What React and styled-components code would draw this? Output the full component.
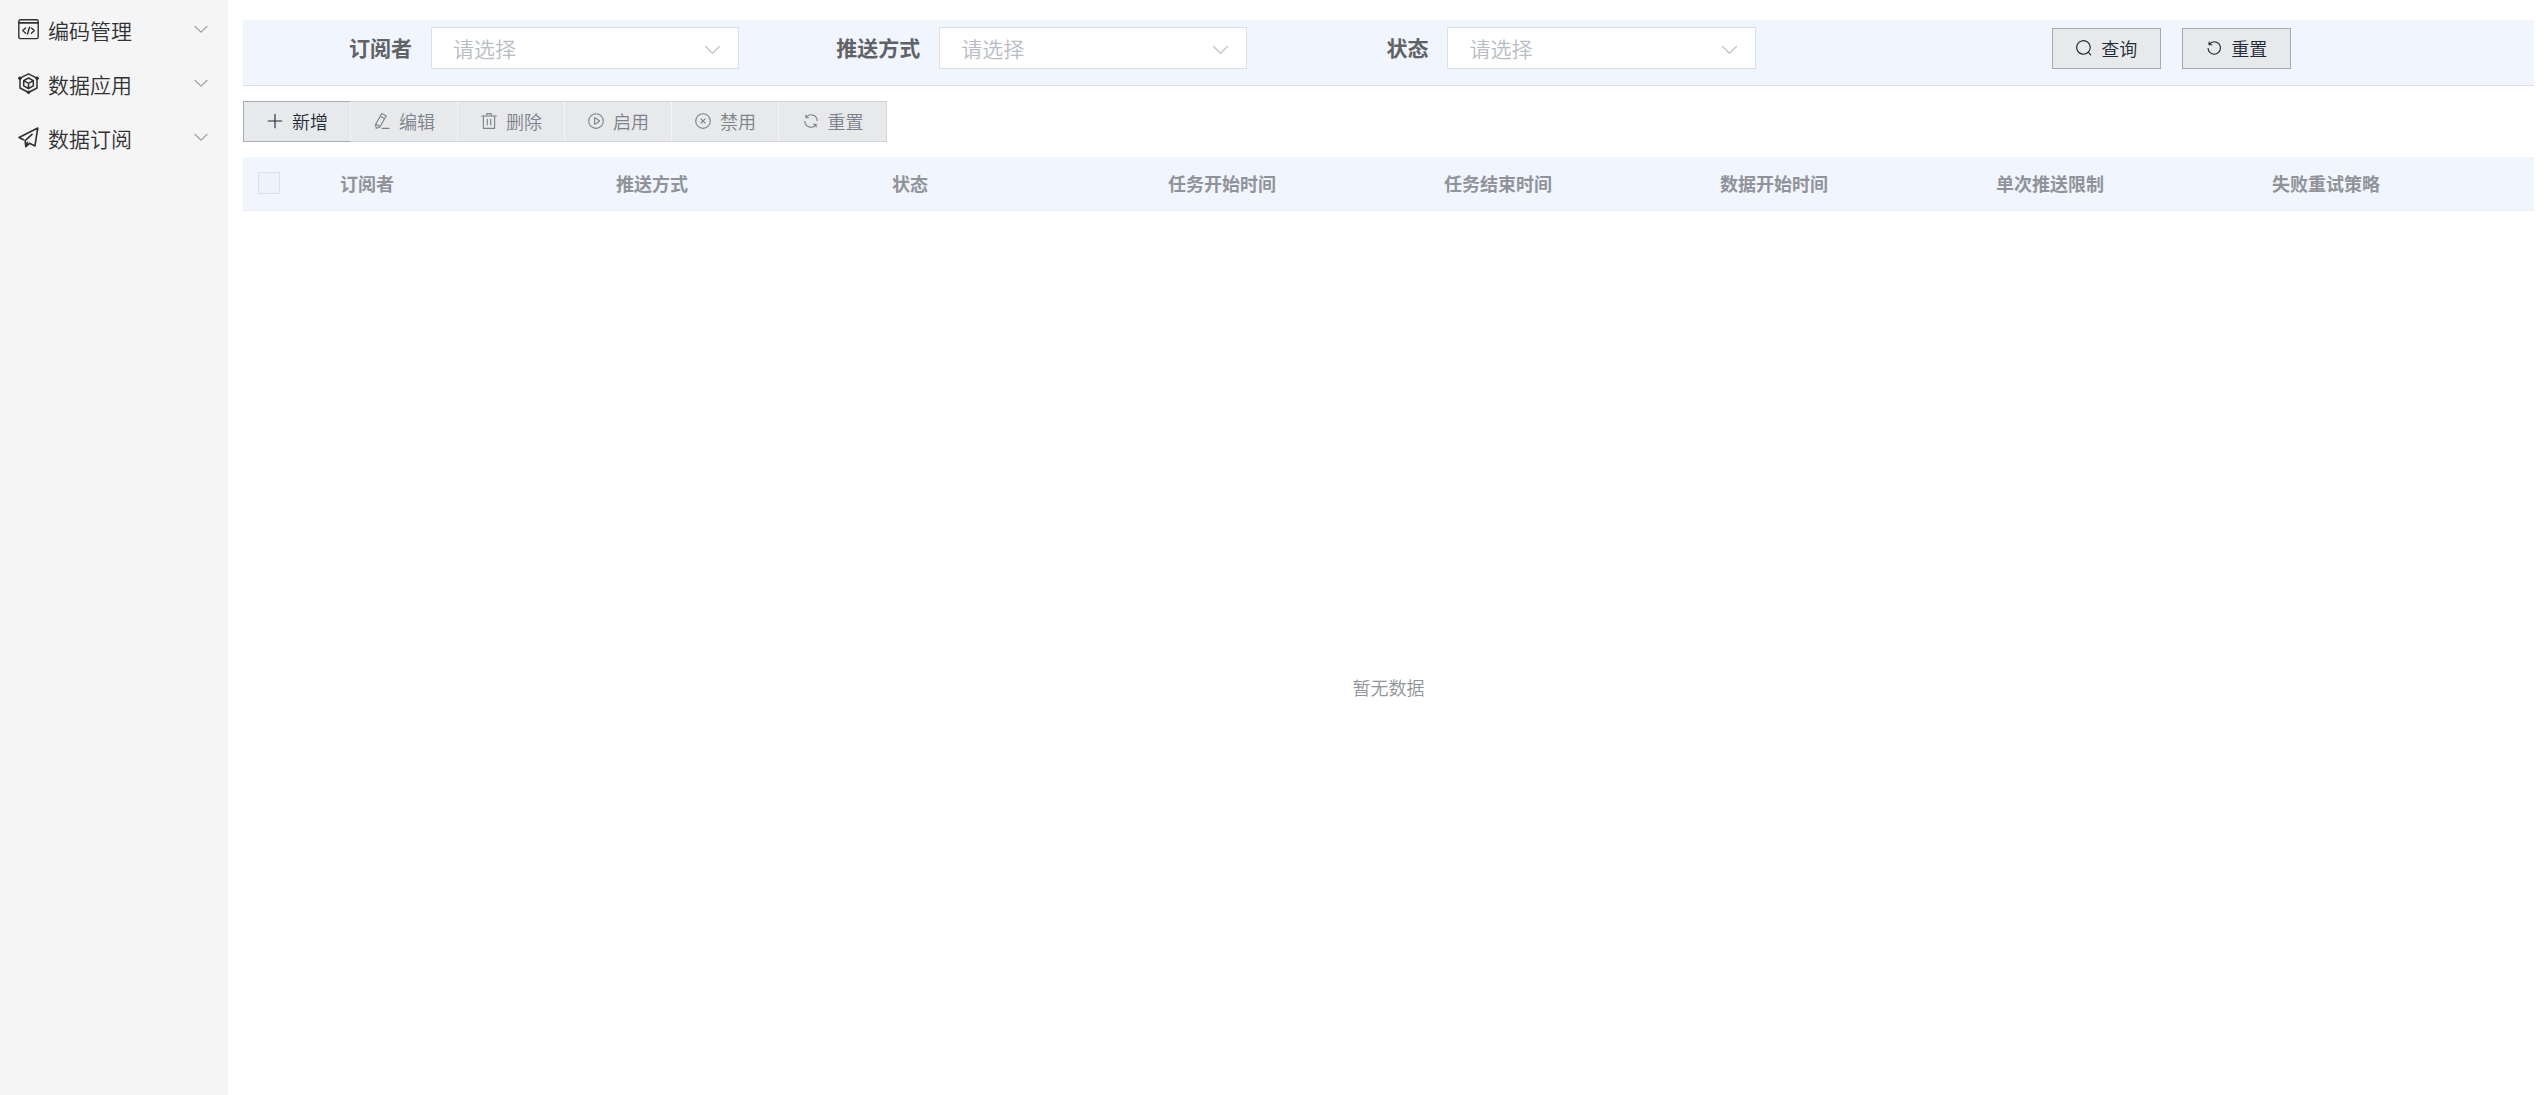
import React, { useState } from 'react'
import styled, { createGlobalStyle } from 'styled-components'

const GlobalStyle = createGlobalStyle`
* {
  box-sizing: border-box;
}
body {
  margin: 0;
  background: white;
  font-family: "Noto Sans CJK SC", "Liberation Sans", sans-serif;
  font-weight: 350;
}
`

const Layout = styled.div`
display: flex;
min-height: 100vh;
`

const Sidebar = styled.nav`
width: 228px;
flex: none;
padding-top: 2px;
background: #f5f5f5;
`

const MenuItem = styled.button`
display: flex;
align-items: center;
width: 100%;
height: 54px;
padding: 0 18px;
border: 0;
background: transparent;
color: #303133;
font: inherit;
font-size: 21px;
text-align: left;
cursor: pointer;
`

const MenuText = styled.span`
flex: 1;
padding: 2px 0 0 9px;
`

const Icon = styled.svg`
flex: none;
width: ${props => props.$size || 18}px;
height: ${props => props.$size || 18}px;
fill: ${props => (props.$line ? 'none' : 'currentColor')};
stroke: ${props => (props.$line ? 'currentColor' : 'none')};
`

const MenuArrow = styled(Icon)`
color: #909399;
`

const Main = styled.main`
flex: 1;
min-width: 0;
padding: 20px 11px 0 15px;
`

const FilterBar = styled.form`
display: grid;
grid-template-columns: 2fr 2fr 2fr 3fr;
align-items: start;
height: 66px;
padding: 7px 4px 0 0;
background: #f1f5fd;
border-bottom: 1px solid #dcdfe6;
`

const Field = styled.div`
display: flex;
align-items: center;
padding-right: 12px;
`

const FieldLabel = styled.label`
flex: none;
width: 188px;
padding: 0 19px 2px 0;
color: #606266;
font-size: 21px;
font-weight: 700;
line-height: 40px;
text-align: right;
`

const SelectBox = styled.div`
position: relative;
flex: 1;
color: #b8bcc5;
`

const Select = styled.select`
appearance: none;
display: block;
width: 100%;
height: 42px;
padding: 0 48px 0 21px;
border: 1px solid #dcdfe6;
border-radius: 0;
background: white;
color: inherit;
font: inherit;
font-size: 21px;
`

const SelectArrow = styled(Icon)`
position: absolute;
top: 12px;
right: 16px;
pointer-events: none;
`

const FilterButtons = styled.div`
display: flex;
gap: 21px;
padding: 1px 0 0 284px;
`

const Button = styled.button`
display: flex;
align-items: center;
justify-content: center;
gap: 8px;
width: 109px;
height: 41px;
padding: 0 0 2px;
border: 1px solid #a4a9b3;
background: #e8e9eb;
color: #1f2937;
font: inherit;
font-size: 18px;
white-space: nowrap;
`

const Toolbar = styled.div`
display: flex;
margin: 15px 0;
`

const ToolButton = styled(Button)`
width: 107px;
border-right-color: #f4f4f5;

&:first-child {
  width: 108px;
}

&:disabled {
  border-color: #d0d3d8;
  border-left-width: 0;
  border-right-color: #f4f4f5;
  color: #7d828c;
}

&:last-child {
  width: 108px;
  border-right-color: #d0d3d8;
}
`

const Table = styled.table`
width: 100%;
table-layout: fixed;
border-collapse: separate;
border-spacing: 0;
`

const HeadCell = styled.th`
width: ${props => props.$width || 'auto'};
height: 54px;
padding: 0 14px 2px;
background: #f1f5fd;
border-bottom: 1px solid #ebeef5;
color: #909399;
font-size: 18px;
font-weight: 700;
text-align: left;
`

const Checkbox = styled.input`
appearance: none;
display: block;
width: 22px;
height: 22px;
margin: 0 1px;
border: 1px solid #dcdfe6;
background: #edf2fc;
`

const EmptyCell = styled.td`
padding: 42vh 0 0;
color: #909399;
font-size: 18px;
line-height: 32px;
text-align: center;
`

const DOWN = 'M831.872 340.864 512 652.672 192.128 340.864a30.592 30.592 0 0 0-42.752 0 29.12 29.12 0 0 0 0 41.6L489.664 714.24a32 32 0 0 0 44.672 0l340.288-331.712a29.12 29.12 0 0 0 0-41.728 30.592 30.592 0 0 0-42.752 0z'

const icons = {
  plus: 'M480 480V128a32 32 0 0 1 64 0v352h352a32 32 0 1 1 0 64H544v352a32 32 0 1 1-64 0V544H128a32 32 0 0 1 0-64h352z',
  edit: 'm199.04 672.64 193.984 112 224-387.968-193.92-112-224 388.032zm-23.872 60.16 32.896 148.288 144.896-45.696L175.168 732.8zM455.04 229.248l193.92 112 56.704-98.112-193.984-112-56.64 98.112zM104.32 708.8l384-665.024 304.768 175.936L409.152 884.8h.064l-248.448 78.336L104.32 708.8zm384 254.272v-64h448v64h-448z',
  remove: 'M160 256H96a32 32 0 0 1 0-64h256V95.936a32 32 0 0 1 32-32h256a32 32 0 0 1 32 32V192h256a32 32 0 1 1 0 64h-64v672a32 32 0 0 1-32 32H192a32 32 0 0 1-32-32V256zm448-64v-64H416v64h192zM224 896h576V256H224v640zm192-128a32 32 0 0 1-32-32V416a32 32 0 0 1 64 0v320a32 32 0 0 1-32 32zm192 0a32 32 0 0 1-32-32V416a32 32 0 0 1 64 0v320a32 32 0 0 1-32 32z',
  play: 'M512 64a448 448 0 1 1 0 896 448 448 0 0 1 0-896zm0 832a384 384 0 0 0 0-768 384 384 0 0 0 0 768zm-48-247.616L668.608 512 464 375.616v272.768zm10.624-342.656 249.472 166.336a48 48 0 0 1 0 79.872L474.624 718.272A48 48 0 0 1 400 678.336V345.6a48 48 0 0 1 74.624-39.872z',
  close: 'm466.752 512-90.496-90.496a32 32 0 0 1 45.248-45.248L512 466.752l90.496-90.496a32 32 0 0 1 45.248 45.248L557.248 512l90.496 90.496a32 32 0 1 1-45.248 45.248L512 557.248l-90.496 90.496a32 32 0 0 1-45.248-45.248L466.752 512z M512 896a384 384 0 1 0 0-768 384 384 0 0 0 0 768zm0 64a448 448 0 1 1 0-896 448 448 0 0 1 0 896z',
  refresh: 'M771.776 794.88A384 384 0 0 1 128 512h64a320 320 0 0 0 555.712 216.448H654.72a32 32 0 1 1 0-64h149.056a32 32 0 0 1 32 32v148.928a32 32 0 1 1-64 0v-50.56zM276.288 295.616h92.992a32 32 0 0 1 0 64H220.16a32 32 0 0 1-32-32V178.56a32 32 0 0 1 64 0v50.56A384 384 0 0 1 896.128 512h-64a320 320 0 0 0-555.776-216.384z',
  search: 'm795.904 750.72 124.992 124.928a32 32 0 0 1-45.248 45.248L750.656 795.904a416 416 0 1 1 45.248-45.248zM480 832a352 352 0 1 0 0-704 352 352 0 0 0 0 704z',
  reset: 'M289.088 296.704h92.992a32 32 0 0 1 0 64H232.96a32 32 0 0 1-32-32V179.712a32 32 0 0 1 64 0v50.56a384 384 0 0 1 643.84 282.88 384 384 0 0 1-383.936 384 384 384 0 0 1-384-384h64a320 320 0 1 0 640 0 320 320 0 0 0-555.712-216.448z',
}

const Glyph = ({ name }) => (
  <Icon viewBox="0 0 1024 1024" aria-hidden="true"><path d={icons[name]} /></Icon>
)

const CodeIcon = () => (
  <Icon $size={21} $line viewBox="0 0 21 21" strokeWidth="1.4" strokeLinecap="round" strokeLinejoin="round" aria-hidden="true">
    <rect x="0.8" y="0.8" width="19.4" height="18.8" rx="1.6" />
    <path d="M1 3.800h19" strokeWidth="1.800" />
    <path d="M7.600 9 4.700 11.600l2.900 2.600M13.400 9l2.900 2.600-2.900 2.600M11.500 8.200l-2 6.800" />
  </Icon>
)

const CubeIcon = () => (
  <Icon $size={21} $line viewBox="0 0 21 21" strokeWidth="1.5" strokeLinejoin="round" aria-hidden="true">
    <path d="M2 6v9l8.500 4.500L19 15V6M3 4.600 10.500 .9 18 4.600" />
    <path d="m10.500 5 4.800 2.600v5.200l-4.800 2.700-4.800-2.700V7.600zM5.700 7.600l4.800 2.700 4.800-2.700M10.500 10.300v5.200" />
    <g fill="currentColor" stroke="none">
      <circle cx="1.900" cy="5.300" r="1.800" />
      <circle cx="19.100" cy="5.300" r="1.800" />
      <circle cx="10.500" cy="19.200" r="1.700" />
    </g>
  </Icon>
)

const PlaneIcon = () => (
  <Icon $size={21} $line viewBox="0 0 21 21" strokeWidth="1.6" strokeLinejoin="round" strokeLinecap="round" aria-hidden="true">
    <path d="M5.500 12.700 1 10.500 19.800 1l-2.900 18-5.300-2.700-3.800 3.400-.7-6.100 6.900-6.200M7.800 19.500l1.700-4.200" />
  </Icon>
)

const menus = [
  { text: '编码管理', icon: <CodeIcon /> },
  { text: '数据应用', icon: <CubeIcon /> },
  { text: '数据订阅', icon: <PlaneIcon /> },
]

const filters = [
  { id: 'subscriber', label: '订阅者' },
  { id: 'pushType', label: '推送方式' },
  { id: 'status', label: '状态' },
]

const tools = [
  { text: '新增', icon: 'plus', enabled: true },
  { text: '编辑', icon: 'edit' },
  { text: '删除', icon: 'remove' },
  { text: '启用', icon: 'play' },
  { text: '禁用', icon: 'close' },
  { text: '重置', icon: 'refresh' },
]

const columns = ['订阅者', '推送方式', '状态', '任务开始时间', '任务结束时间', '数据开始时间', '单次推送限制', '失败重试策略']

export default function App() {
  const [values, setValues] = useState({ subscriber: '', pushType: '', status: '' })

  return (
    <Layout>
      <GlobalStyle />
      <Sidebar>
        {menus.map(menu => (
          <MenuItem key={menu.text} type="button" aria-expanded="false">
            {menu.icon}
            <MenuText>{menu.text}</MenuText>
            <MenuArrow viewBox="0 0 1024 1024" aria-hidden="true"><path d={DOWN} /></MenuArrow>
          </MenuItem>
        ))}
      </Sidebar>
      <Main>
        <FilterBar onSubmit={e => e.preventDefault()}>
          {filters.map(({ id, label }) => (
            <Field key={id}>
              <FieldLabel htmlFor={id}>{label}</FieldLabel>
              <SelectBox>
                <Select
                  id={id}
                  value={values[id]}
                  onChange={e => setValues({ ...values, [id]: e.target.value })}
                >
                  <option value="">请选择</option>
                </Select>
                <SelectArrow $size={21} viewBox="0 0 1024 1024" aria-hidden="true"><path d={DOWN} /></SelectArrow>
              </SelectBox>
            </Field>
          ))}
          <FilterButtons>
            <Button type="submit"><Glyph name="search" />查询</Button>
            <Button type="reset"><Glyph name="reset" />重置</Button>
          </FilterButtons>
        </FilterBar>
        <Toolbar>
          {tools.map(tool => (
            <ToolButton key={tool.icon} type="button" disabled={!tool.enabled}>
              <Glyph name={tool.icon} />
              {tool.text}
            </ToolButton>
          ))}
        </Toolbar>
        <Table>
          <thead>
            <tr>
              <HeadCell $width="83px">
                <Checkbox type="checkbox" aria-label="全选" disabled />
              </HeadCell>
              {columns.map(column => (
                <HeadCell key={column} scope="col">{column}</HeadCell>
              ))}
            </tr>
          </thead>
          <tbody>
            <tr>
              <EmptyCell colSpan={columns.length + 1}>暂无数据</EmptyCell>
            </tr>
          </tbody>
        </Table>
      </Main>
    </Layout>
  )
}
